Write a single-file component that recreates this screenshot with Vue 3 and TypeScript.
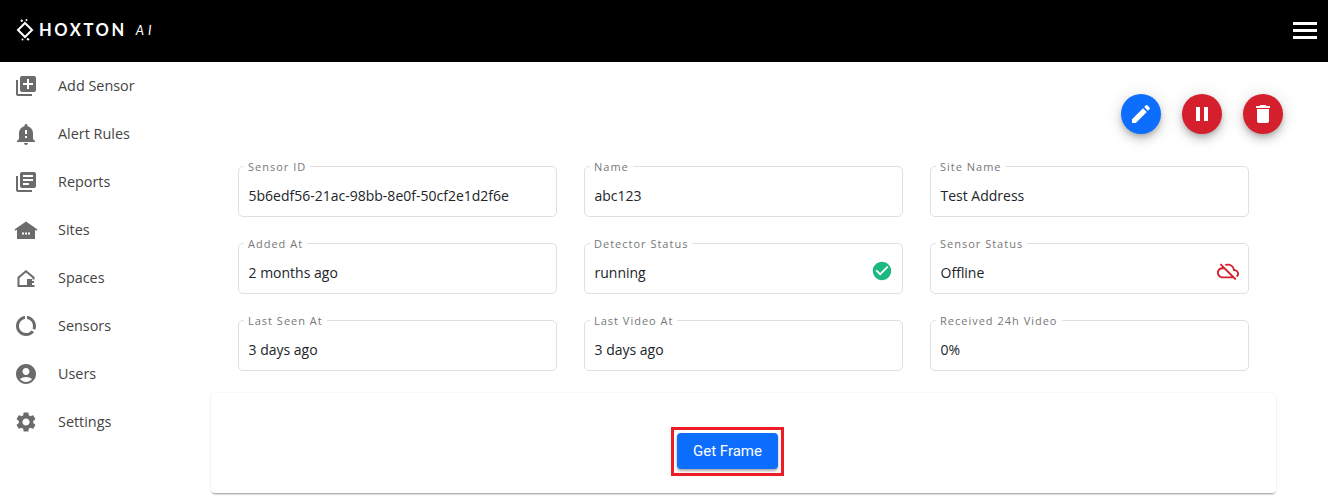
<script setup lang="ts">
interface NavItem {
  label: string;
  icon: string;
}

interface Field {
  label: string;
  value: string;
  status?: "ok" | "offline";
}

const navItems: NavItem[] = [
  { label: "Add Sensor", icon: "M4 6H2v14c0 1.1.9 2 2 2h14v-2H4V6zm16-4H8c-1.1 0-2 .9-2 2v12c0 1.1.9 2 2 2h12c1.1 0 2-.9 2-2V4c0-1.1-.9-2-2-2zm-1 9h-4v4h-2v-4H9V9h4V5h2v4h4v2z" },
  { label: "Alert Rules", icon: "M12 23c1.1 0 1.99-.89 1.99-1.99h-3.98c0 1.1.89 1.99 1.99 1.99zm7-6v-6c0-3.35-2.36-6.15-5.5-6.83V3.5c0-.83-.67-1.5-1.5-1.5s-1.5.67-1.5 1.5v.67C7.36 4.85 5 7.65 5 11v6l-2 2v1h18v-1l-2-2zm-6-1h-2v-2h2v2zm0-4h-2V8h2v4z" },
  { label: "Reports", icon: "M4 6H2v14c0 1.1.9 2 2 2h14v-2H4V6zm16-4H8c-1.1 0-2 .9-2 2v12c0 1.1.9 2 2 2h12c1.1 0 2-.9 2-2V4c0-1.1-.9-2-2-2zm-1 9H9V9h10v2zm-4 4H9v-2h6v2zm4-8H9V5h10v2z" },
  { label: "Sites", icon: "M12 3.5 0.5 11.5l.9 1.3L3 11.8V21h18v-9.2l1.6 1 .9-1.3zM8 14.5h2v2H8zm3 0h2v2h-2zm3 0h2v2h-2z" },
  { label: "Spaces", icon: "M12 4 3.5 11V21H20.5V19H5.5V12L12 6.5 18.5 12V13.5H20.5V11ZM13 13H18V15H20V17H18V19H13Z" },
  { label: "Sensors", icon: "M13 2.05v3.03c3.39.49 6 3.39 6 6.92 0 .9-.18 1.75-.48 2.54l2.6 1.53c.56-1.24.88-2.62.88-4.07 0-5.18-3.95-9.45-9-9.95zM12 19c-3.87 0-7-3.13-7-7 0-3.53 2.61-6.43 6-6.92V2.05c-5.06.5-9 4.76-9 9.95 0 5.52 4.47 10 9.99 10 3.31 0 6.24-1.61 8.06-4.09l-2.6-1.53C16.17 17.98 14.21 19 12 19z" },
  { label: "Users", icon: "M12 2C6.48 2 2 6.48 2 12s4.48 10 10 10 10-4.48 10-10S17.52 2 12 2zm0 4c1.93 0 3.5 1.57 3.5 3.5S13.93 13 12 13s-3.5-1.57-3.5-3.5S10.07 6 12 6zm0 14c-2.03 0-4.43-.82-6.14-2.88C7.55 15.8 9.68 15 12 15s4.45.8 6.14 2.12C16.43 19.18 14.03 20 12 20z" },
  { label: "Settings", icon: "M19.14 12.94c.04-.3.06-.61.06-.94 0-.32-.02-.64-.07-.94l2.03-1.58c.18-.14.23-.41.12-.61l-1.92-3.32c-.12-.22-.37-.29-.59-.22l-2.39.96c-.5-.38-1.03-.7-1.62-.94l-.36-2.54c-.04-.24-.24-.41-.48-.41h-3.84c-.24 0-.43.17-.47.41l-.36 2.54c-.59.24-1.13.57-1.62.94l-2.39-.96c-.22-.08-.47 0-.59.22L2.74 8.87c-.12.21-.08.47.12.61l2.03 1.58c-.05.3-.09.63-.09.94s.02.64.07.94l-2.03 1.58c-.18.14-.23.41-.12.61l1.92 3.32c.12.22.37.29.59.22l2.39-.96c.5.38 1.03.7 1.62.94l.36 2.54c.05.24.24.41.48.41h3.84c.24 0 .44-.17.47-.41l.36-2.54c.59-.24 1.13-.56 1.62-.94l2.39.96c.22.08.47 0 .59-.22l1.92-3.32c.12-.22.07-.47-.12-.61l-2.01-1.58zM12 15.6c-1.98 0-3.6-1.62-3.6-3.6s1.62-3.6 3.6-3.6 3.6 1.62 3.6 3.6-1.62 3.6-3.6 3.6z" },
];

const fields: Field[] = [
  { label: "Sensor ID", value: "5b6edf56-21ac-98bb-8e0f-50cf2e1d2f6e" },
  { label: "Name", value: "abc123" },
  { label: "Site Name", value: "Test Address" },
  { label: "Added At", value: "2 months ago" },
  { label: "Detector Status", value: "running", status: "ok" },
  { label: "Sensor Status", value: "Offline", status: "offline" },
  { label: "Last Seen At", value: "3 days ago" },
  { label: "Last Video At", value: "3 days ago" },
  { label: "Received 24h Video", value: "0%" },
];
</script>

<template>
  <div class="page">
    <header class="topbar">
      <div class="logo">
        <svg class="logo-mark" viewBox="0 0 18 24" aria-hidden="true">
          <path d="M9 5 L16 12 L9 19 L2 12 Z" fill="none" stroke="#fff" stroke-width="2" />
          <path d="M5 2 L6.5 3.5" fill="none" stroke="#fff" stroke-width="2" />
          <circle cx="10.5" cy="2" r="1" fill="#fff" />
          <circle cx="6.5" cy="21.5" r="1" fill="#fff" />
          <path d="M11 20.5 L13 22" fill="none" stroke="#fff" stroke-width="2" />
        </svg>
        <span class="logo-name">HOXTON</span>
        <span class="logo-ai">AI</span>
      </div>
      <button class="burger" aria-label="Menu">
        <span></span><span></span><span></span>
      </button>
    </header>

    <div class="layout">
      <nav class="sidebar">
        <a v-for="item in navItems" :key="item.label" class="nav-item">
          <svg class="nav-icon" viewBox="0 0 24 24" aria-hidden="true"><path :d="item.icon" /></svg>
          <span class="nav-label">{{ item.label }}</span>
        </a>
      </nav>

      <main class="content">
        <div class="actions">
          <button class="fab fab-blue" aria-label="Edit">
            <svg viewBox="0 0 24 24"><path d="M3 17.25V21h3.75L17.81 9.94l-3.75-3.75L3 17.25zM20.71 7.04c.39-.39.39-1.02 0-1.41l-2.34-2.34c-.39-.39-1.02-.39-1.41 0l-1.83 1.83 3.75 3.75 1.83-1.83z" /></svg>
          </button>
          <button class="fab fab-red" aria-label="Pause">
            <svg viewBox="0 0 24 24"><path d="M6 19h4V5H6v14zm8-14v14h4V5h-4z" /></svg>
          </button>
          <button class="fab fab-red" aria-label="Delete">
            <svg viewBox="0 0 24 24"><path d="M6 19c0 1.1.9 2 2 2h8c1.1 0 2-.9 2-2V7H6v12zM19 4h-3.5l-1-1h-5l-1 1H5v2h14V4z" /></svg>
          </button>
        </div>

        <div class="fields">
          <div v-for="field in fields" :key="field.label" class="field">
            <span class="field-label">{{ field.label }}</span>
            <span class="field-value">{{ field.value }}</span>
            <svg v-if="field.status === 'ok'" class="status status-ok" viewBox="0 0 24 24"><path d="M12 2C6.48 2 2 6.48 2 12s4.48 10 10 10 10-4.48 10-10S17.52 2 12 2zm-2 15l-5-5 1.41-1.41L10 14.17l7.59-7.59L19 8l-9 9z" /></svg>
            <svg v-if="field.status === 'offline'" class="status status-off" viewBox="0 0 24 24"><path d="M24 15c0-2.64-2.05-4.78-4.65-4.96C18.67 6.59 15.64 4 12 4c-1.33 0-2.57.36-3.65.97l1.49 1.49C10.51 6.17 11.23 6 12 6c3.04 0 5.5 2.46 5.5 5.5v.5H19c1.66 0 3 1.34 3 3 0 .99-.48 1.85-1.21 2.4l1.41 1.41c1.09-.92 1.8-2.27 1.8-3.81zM4.41 3.86L3 5.27l2.77 2.77h-.42C2.34 8.36 0 10.91 0 14c0 3.31 2.69 6 6 6h11.73l2 2 1.41-1.41L4.41 3.86zM6 18c-2.21 0-4-1.79-4-4s1.79-4 4-4h1.73l8 8H6z" /></svg>
          </div>
        </div>

        <section class="card">
          <div class="highlight">
            <button class="frame-btn">Get Frame</button>
          </div>
        </section>
      </main>
    </div>
  </div>
</template>

<style>
html,
body {
  margin: 0;
  background: #fff;
}
</style>

<style scoped>
.page {
  display: flex;
  flex-direction: column;
  height: 499px;
  overflow: hidden;
  font-family: "Open Sans", sans-serif;
}

.topbar {
  display: flex;
  align-items: center;
  justify-content: space-between;
  flex: none;
  box-sizing: border-box;
  height: 62px;
  padding: 0 11px 2px 16px;
  background: #000;
}

.logo {
  display: flex;
  align-items: center;
  color: #fff;
}

.logo-mark {
  width: 18px;
  height: 24px;
}

.logo-name {
  margin-left: 5px;
  font-family: "Lato", sans-serif;
  font-size: 16.5px;
  font-weight: 700;
  letter-spacing: 2.6px;
}

.logo-ai {
  margin-left: 9px;
  font-family: "Lato", sans-serif;
  font-size: 13px;
  font-style: italic;
  letter-spacing: 4px;
}

.burger {
  display: flex;
  flex-direction: column;
  gap: 4px;
  width: 24px;
  padding: 0;
  border: 0;
  background: none;
}

.burger span {
  height: 3px;
  background: #fff;
}

.layout {
  display: flex;
  flex: 1;
  min-height: 0;
}

.sidebar {
  display: flex;
  flex-direction: column;
  flex: none;
  width: 211px;
}

.nav-item {
  display: flex;
  align-items: center;
  gap: 20px;
  height: 48px;
  padding-left: 14px;
  font-size: 14.4px;
  color: #444;
}

.nav-label {
  margin-top: -2px;
}

.nav-icon {
  width: 24px;
  height: 24px;
  fill: #6b6b6b;
}

.content {
  flex: 1;
  min-width: 0;
  padding-right: 52px;
}

.actions {
  display: flex;
  justify-content: flex-end;
  gap: 21px;
  margin: 32px -7px 32px 0;
}

.fab {
  display: flex;
  align-items: center;
  justify-content: center;
  width: 40px;
  height: 40px;
  padding: 0;
  border: 0;
  border-radius: 50%;
  box-shadow: 0 3px 5px -1px rgba(0, 0, 0, 0.2), 0 6px 10px 0 rgba(0, 0, 0, 0.14), 0 1px 18px 0 rgba(0, 0, 0, 0.12);
}

.fab svg {
  width: 24px;
  height: 24px;
  fill: #fff;
}

.fab-blue {
  background: #0d6efd;
}

.fab-red {
  background: #d61f2c;
}

.fields {
  display: grid;
  grid-template-columns: repeat(3, 1fr);
  gap: 26px 27px;
  padding: 0 27px;
}

.field {
  position: relative;
  display: flex;
  align-items: center;
  justify-content: space-between;
  box-sizing: border-box;
  height: 51px;
  padding: 7px 9px 0 9.5px;
  border: 1px solid #e0e0e0;
  border-radius: 5px;
}

.field-label {
  position: absolute;
  top: -7px;
  left: 5px;
  padding: 0 4px;
  background: #fff;
  font-size: 11px;
  line-height: 14px;
  letter-spacing: 1px;
  color: #777;
}

.field-value {
  font-size: 14px;
  color: #212529;
}

.status {
  width: 22px;
  height: 22px;
  margin-top: -3px;
}

.status-ok {
  fill: #1eb980;
}

.status-off {
  fill: #d61f2c;
}

.card {
  display: flex;
  align-items: center;
  justify-content: center;
  box-sizing: border-box;
  height: 100px;
  margin-top: 22px;
  padding: 17px 32px 0 0;
  border-radius: 4px;
  background: #fff;
  box-shadow: 0 2px 2px -1px rgba(0, 0, 0, 0.4), 0 0 3px rgba(0, 0, 0, 0.07);
}

.highlight {
  display: flex;
  padding: 3px 3px 4px;
  border: 3px solid #ee1c25;
}

.frame-btn {
  width: 101px;
  height: 36px;
  padding: 0;
  border: 0;
  border-radius: 4px;
  background: #0d6efd;
  font-family: "Roboto", sans-serif;
  font-size: 15px;
  font-weight: 400;
  color: #fff;
  box-shadow: 0 2px 3px rgba(0, 0, 0, 0.35);
}
</style>
